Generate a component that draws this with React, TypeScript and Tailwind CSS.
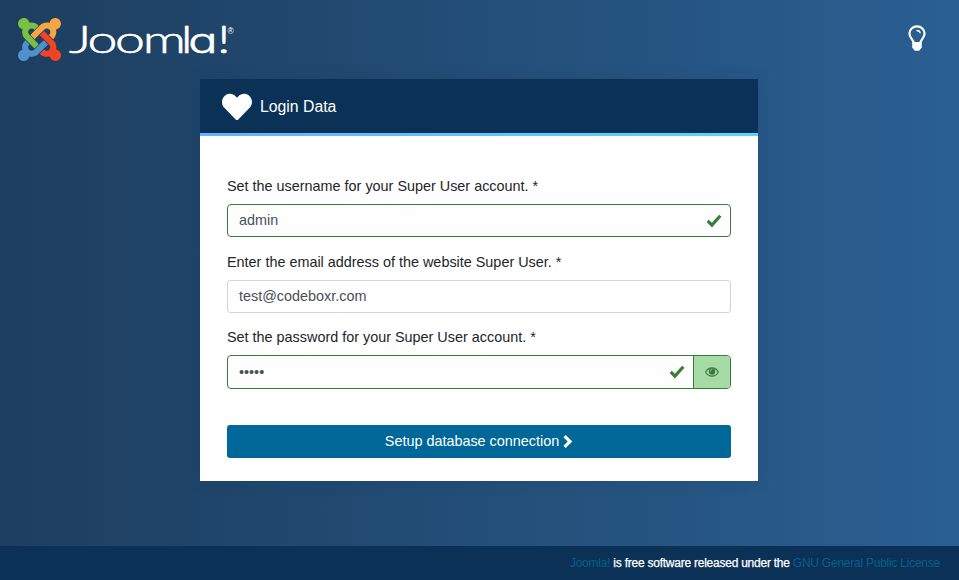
import type { ReactNode } from "react";
import { FaHeart } from "react-icons/fa";

const LOGO_PARTS = [
  {
    fill: "#7ac143",
    d: "M.6 92.1C.6 58.8 27.4 32 60.4 32c30 0 54.5 21.9 59.2 50.2 32.6-7.6 67.1.6 96.5 30l-44.3 44.3c-20.5-20.5-42.6-16.3-55.4-3.5-14.3 14.3-14.3 37.9 0 52.2l99.5 99.5-44 44.3c-87.7-87.2-49.7-49.7-99.8-99.7-26.8-26.5-35-64.8-24.8-98.9C20.4 144.6.6 120.7.6 92.1z",
  },
  {
    fill: "#f9a541",
    d: "M130.1 208.5l44.3 44.3c10-10 89.7-89.7 99.7-99.8 14.3-14.3 37.6-14.3 51.9 0 12.8 12.8 17 35-3.5 55.4l44 44.3c31.2-31.2 38.5-67.6 28.9-101.2 29.2-4.1 51.9-29.2 51.9-59.5 0-33.2-26.8-60.1-59.8-60.1-30.3 0-55.4 22.5-59.5 51.6-33.8-9.9-71.7-1.5-98.3 25.1-18.3 19.1-71.1 71.5-99.6 99.9z",
  },
  {
    fill: "#f44321",
    d: "M396.4 360.7c8.2-32.7-.9-68.5-26.3-93.9-11.8-12.2 5 4.7-99.5-99.7l-44.3 44.3 99.7 99.7c14.3 14.3 14.3 37.6 0 51.9-12.8 12.8-35 17-55.4-3.5l-44 44.3c27.6 30.2 68 38.8 102.7 28 5.5 27.4 29.7 48.1 58.9 48.1 33 0 59.8-26.8 59.8-60.1 0-30.2-22.5-55-51.6-59.1z",
  },
  {
    fill: "#5091cd",
    d: "M312.1 307.6l-44-44.3c-87 86.4-50.4 50.4-99.7 99.8-14.3 14.3-37.6 14.3-51.9 0-13.1-13.4-16.9-35.3 3.2-55.4l-44-44.3c-30.2 30.2-38 65.2-29.5 98.3-26.7 6-46.2 29.9-46.2 58.2C0 453.2 26.8 480 59.8 480c28.6 0 52.5-19.8 58.6-46.7 32.7 8.2 68.5-.6 94.2-26 32.1-32 12.2-12.4 99.5-99.7z",
  },
];

function JoomlaLogo() {
  return (
    <div className="flex text-white">
      <svg className="size-[43px]" viewBox="0 32 448 448">
        {LOGO_PARTS.map((part) => (
          <path key={part.fill} d={part.d} fill={part.fill} />
        ))}
      </svg>
      <svg className="ml-2 h-[43px] w-[168px] overflow-visible" viewBox="0 0 168 43" fill="currentColor">
        <g transform="translate(0 34.5) scale(1.45 1)">
          <text
            className="font-['Lato'] text-[37px] font-light"
            stroke="currentColor"
            strokeWidth="0.6"
            x="0 12.7 31.7 50.8 77"
          >
            Jooml
            <tspan className="font-['Inter'] text-[33.5px] [font-feature-settings:'cv11']" x="82.3">
              a
            </tspan>
            <tspan x="102">!</tspan>
          </text>
        </g>
        <text className="font-['Liberation_Sans'] text-[8.5px]" x="158.5" y="15.5">
          ®
        </text>
      </svg>
    </div>
  );
}

function LightbulbIcon() {
  return (
    <svg className="h-[27px] w-[18px]" viewBox="0 0 18 27" fill="none">
      <path
        d="M5.8 18C5.5 14.6 1.4 13 1.4 8.6a7.6 7.3 0 0 1 15.2 0c0 4.4-4.1 6-4.4 9.4"
        stroke="currentColor"
        strokeWidth="2.2"
      />
      <path d="M4.2 17h9.6v5.5L11.2 25.8H6.8L4.2 22.5z" fill="currentColor" />
      <path d="M8.5 5.5c2.3 0 3.6 1 3.7 2.8" stroke="currentColor" strokeWidth="1.3" />
    </svg>
  );
}

function CheckIcon() {
  return (
    <svg className="h-[14px] w-[16px]" viewBox="0 0 16 14" fill="none">
      <path d="M1.7 6.9L5.9 11.1L14.3 1.7" stroke="#3a7d3a" strokeWidth="3.2" />
    </svg>
  );
}

function EyeIcon() {
  return (
    <svg className="h-[10px] w-[14px]" viewBox="0 0 14 10" fill="none" stroke="#3a7d3a">
      <path d="M.6 5C3.6-.5 10.4-.5 13.4 5C10.4 10.5 3.6 10.5.6 5z" strokeWidth="1.1" />
      <circle cx="7" cy="4.5" r="3.2" fill="#3a7d3a" stroke="none" />
      <path d="M5.2 4.4C5.2 3.3 5.9 2.7 7 2.7" stroke="#a6dba6" strokeWidth=".8" />
    </svg>
  );
}

function Label({ children }: { children: ReactNode }) {
  return <div className="h-[18px] text-[14.4px] leading-[18px] text-[#22262a]">{children}</div>;
}

export default function App() {
  return (
    <div className="flex h-[580px] w-[959px] flex-col overflow-hidden bg-linear-to-r from-[#1d3e5f] to-[#2a5f92] font-['Liberation_Sans',Arial,sans-serif]">
      <header className="flex h-[79px] shrink-0 items-start justify-between pr-[33px] pl-[18px]">
        <div className="pt-[18px]">
          <JoomlaLogo />
        </div>
        <div className="pt-[25px] text-white">
          <LightbulbIcon />
        </div>
      </header>

      <main className="ml-[200px] h-[402px] w-[558px] shrink-0 bg-white shadow-[0_0_14px_rgba(20,50,85,0.2)]">
        <div className="flex h-[54px] items-center bg-[#0b3156] pt-[2px] pl-[22px] text-white">
          <FaHeart className="size-[30px]" />
          <h1 className="ml-[8px] text-[15.8px]">Login Data</h1>
        </div>
        <div className="h-[3px] bg-linear-to-r from-[#65b1ff] to-[#5bd3fb]" />

        <div className="px-[27px] pt-[41px]">
          <Label>Set the username for your Super User account. *</Label>
          <div className="mt-[9px] flex h-[33px] items-center justify-between rounded-[4px] border border-[#3a7d3a] bg-[#fefefe] pr-[8px] pl-[11px] text-[14.4px] text-[#495057]">
            admin
            <CheckIcon />
          </div>

          <div className="mt-[16px]">
            <Label>Enter the email address of the website Super User. *</Label>
          </div>
          <div className="mt-[9px] flex h-[33px] items-center rounded-[3px] border border-[#d5d5d5] bg-[#fefefe] pl-[11px] text-[14.4px] text-[#495057]">
            test@codeboxr.com
          </div>

          <div className="mt-[15px]">
            <Label>Set the password for your Super User account. *</Label>
          </div>
          <div className="mt-[9px] flex h-[34px] overflow-hidden rounded-[4px] border border-[#3a7d3a] bg-[#fefefe]">
            <div className="flex flex-1 items-center justify-between pr-[8px] pl-[11px] text-[14.4px] text-[#495057]">
              <span className="pt-[2px]">•••••</span>
              <CheckIcon />
            </div>
            <button className="flex w-[37px] items-center justify-center border-l border-[#3a7d3a] bg-[#a6dba6]">
              <EyeIcon />
            </button>
          </div>

          <button className="mt-[36px] flex h-[33px] w-full items-center justify-center rounded-[3px] bg-[#006898] text-[14.4px] text-white">
            Setup database connection
            <svg className="ml-1 h-[13px] w-[10px]" viewBox="0 0 10 13" fill="none">
              <path d="M1.6 1.2L7 6.5L1.6 11.8" stroke="currentColor" strokeWidth="3.2" />
            </svg>
          </button>
        </div>
      </main>

      <footer className="mt-auto flex h-[34px] shrink-0 items-center justify-end bg-[#0b3156] pr-[19px] text-[12px] tracking-[-0.24px] text-white">
        <p className="whitespace-pre">
          <a className="text-[#075f8f]">Joomla!</a>
          <span className="[-webkit-text-stroke:0.25px_white]"> is free software released under the </span>
          <a className="text-[#075f8f]">GNU General Public License</a>
        </p>
      </footer>
    </div>
  );
}
